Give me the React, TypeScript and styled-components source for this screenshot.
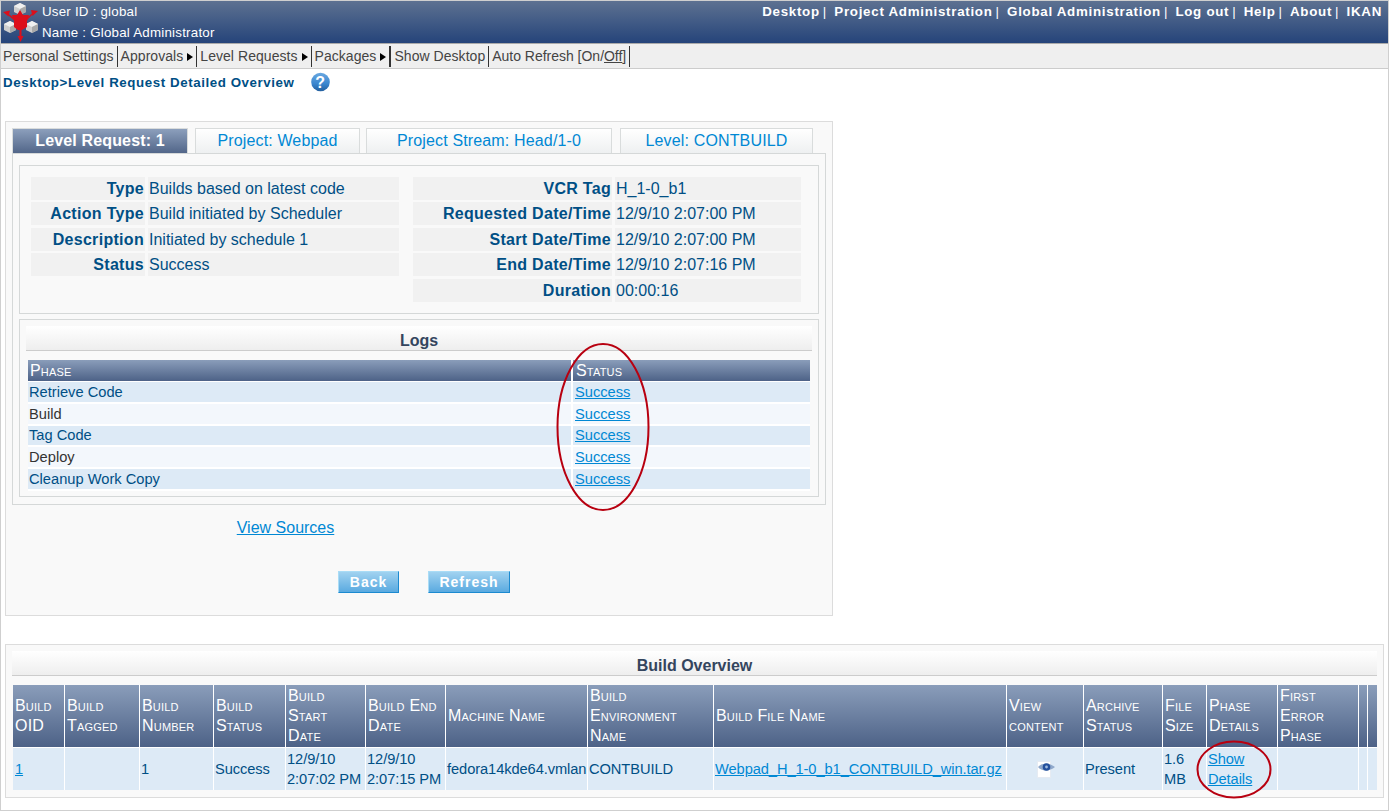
import React from "react";
import styled, { createGlobalStyle } from "styled-components";

const Global = createGlobalStyle`
  html, body { margin: 0; padding: 0; background: #fff; }
  body { font-family: "Liberation Sans", Arial, sans-serif; color: #004f85; }
  * { box-sizing: border-box; }
  a { color: #0088d4; text-decoration: underline; }
`;

const Page = styled.div`
  position: relative;
  width: 1389px;
  height: 811px;
  border: 1px solid #cfcfcf;
  overflow: hidden;
  background: #fff;
`;

const Header = styled.header`
  height: 43px;
  display: flex;
  justify-content: space-between;
  background: linear-gradient(#5d7191, #25447a);
  border-bottom: 1px solid #aaa;
  color: #fff;
`;
const Brand = styled.div`
  display: flex;
`;
const Who = styled.div`
  padding-left: 1px;
  font-size: 13.33px;
  letter-spacing: 0.22px;
  line-height: 21px;
`;
const TopNav = styled.nav`
  font-size: 13.33px;
  font-weight: bold;
  letter-spacing: 0.72px;
  padding: 2px 6px 0 0;
  line-height: 18px;
  white-space: nowrap;
  & span { font-weight: normal; margin: 0 8px 0 3px; letter-spacing: 0; }
`;

const Menu = styled.nav`
  height: 25px;
  display: flex;
  background: #efefef;
  border-bottom: 1px solid #ccc;
  font-size: 14px;
  letter-spacing: 0.05px;
  color: #444;
  padding-top: 2px;
`;
const MenuItem = styled.div`
  height: 21px;
  line-height: 20px;
  padding: 0 3px 2px ${(p) => (p.$first ? 2 : 3)}px;
  border-right: ${(p) => (p.$thick ? 2 : 1)}px solid #333;
  letter-spacing: ${(p) => (p.$tight ? "-0.02px" : "inherit")};
  white-space: nowrap;
  display: flex;
  align-items: center;
  gap: 4px;
  & u { text-decoration: underline; }
`;
const Arrow = styled.i`
  width: 0;
  height: 0;
  margin-top: 2px;
  border-left: 6px solid #000;
  border-top: 4px solid transparent;
  border-bottom: 4px solid transparent;
`;

const Crumb = styled.div`
  height: 52px;
  display: flex;
  align-items: flex-start;
  padding: 4px 0 0 2px;
  font-size: 13.33px;
  font-weight: bold;
  letter-spacing: 0.57px;
  line-height: 20px;
  & svg { margin: -1px 0 0 16px; }
`;

const Panel = styled.section`
  margin-left: 4px;
  width: 828px;
  height: 495px;
  background: #f9f9f9;
  border: 1px solid #dcdcdc;
  padding: 6px 6px 0;
`;
const Tabs = styled.div`
  display: flex;
  height: 26px;
`;
const Tab = styled.div`
  width: ${(p) => p.$w}px;
  margin-left: ${(p) => p.$gap}px;
  height: 25px;
  text-align: center;
  line-height: 24px;
  font-size: 16px;
  letter-spacing: 0.15px;
  color: ${(p) => (p.$active ? "#fff" : "#0088d4")};
  font-weight: ${(p) => (p.$active ? "bold" : "normal")};
  background: ${(p) =>
    p.$active ? "linear-gradient(#8c9fbc, #526689)" : "linear-gradient(#fff, #eef0f1)"};
  border: 1px solid #d9dcdc;
  border-bottom: 0;
`;
const Outer = styled.div`
  width: 814px;
  height: 352px;
  margin-top: -1px;
  border: 1px solid #d5d8d8;
  padding: 11px 6px 0;
`;
const Details = styled.div`
  height: 149px;
  border: 1px solid #d5d8d8;
  padding: 11px 10px 0 11px;
  display: grid;
  grid-template-columns: 368px 388px;
  column-gap: 14px;
  align-items: start;
`;
const Rows = styled.div`
  display: flex;
  flex-direction: column;
  gap: 3.4px;
`;
const DRow = styled.div`
  display: grid;
  grid-template-columns: ${(p) => p.$label}px 1fr;
  column-gap: 3px;
  height: 22px;
  line-height: 23px;
  font-size: 16px;
  white-space: nowrap;
`;
const DLabel = styled.b`
  background: #f1f1f1;
  text-align: right;
  padding-right: 1px;
  letter-spacing: 0.3px;
`;
const DValue = styled.span`
  background: #f1f1f1;
  padding-left: 1px;
`;
const Logs = styled.div`
  margin-top: 5px;
  height: 178px;
  border: 1px solid #d5d8d8;
  padding: 6px 6px 0;
`;
const Title = styled.h3`
  margin: 0;
  height: 25px;
  background: linear-gradient(#fff, #eee);
  border-bottom: 1px solid #ccc;
  text-align: center;
  color: #34455e;
  font-size: 16px;
  line-height: 30px;
`;
const Th = styled.th`
  background: linear-gradient(#8a9dba, #4d6287);
  color: #fff;
  font-weight: normal;
  font-variant: small-caps;
  font-size: 16px;
  letter-spacing: 0.2px;
  line-height: 20px;
  text-align: left;
`;
const LogTable = styled.table`
  table-layout: fixed;
  border-collapse: separate;
  border-spacing: 0;
  width: 782px;
  margin: 9px 0 0 2px;
  font-size: 14.67px;
  & th { height: 22px; padding: 0 0 0 2px; border-bottom: 1px solid #fff; }
  & td { padding: 0 0 0 1px; border-bottom: 2px solid #fff; line-height: 19px; white-space: nowrap; }
  & th:first-child, & td:first-child { border-right: 2px solid #fff; }
  & th:last-child { padding-left: 3px; }
  & td:last-child { padding-left: 2px; }
`;
const LogRow = styled.tr`
  background: ${(p) => (p.$alt ? "#f3f7fc" : "#ddeaf6")};
  color: ${(p) => (p.$alt ? "#333" : "#004f85")};
  & td { height: ${(p) => p.$h}px; }
`;

const SourceLink = styled.div`
  width: 547px;
  text-align: center;
  margin-top: 13px;
  font-size: 16px;
  line-height: 20px;
`;
const Buttons = styled.div`
  display: flex;
  gap: 29px;
  margin: 33px 0 0 326px;
`;
const Button = styled.button`
  height: 22px;
  width: ${(p) => p.$w}px;
  padding: 0;
  border: 0;
  border-top: 1px solid #a9dcf6;
  border-left: 1px solid #a9dcf6;
  border-right: 1px solid #1c8ad0;
  border-bottom: 1px solid #1c8ad0;
  background: linear-gradient(#a0d2f0, #5aaae0);
  color: #fff;
  font-family: inherit;
  font-weight: bold;
  font-size: 14px;
  letter-spacing: 1px;
`;

const BuildPanel = styled.section`
  margin: 28px 0 0 4px;
  width: 1379px;
  height: 154px;
  background: #f9f9f9;
  border: 1px solid #dcdcdc;
  padding: 6px 6px 0;
`;
const BuildTable = styled.table`
  table-layout: fixed;
  border-collapse: separate;
  border-spacing: 0;
  width: 1364px;
  margin: 9px 0 0 1px;
  font-size: 14.67px;
  letter-spacing: -0.08px;
  & th, & td { border-right: 1px solid #fff; }
  & th:last-child, & td:last-child { border-right: 0; }
  & td { padding: 0 0 0 1px; border-top: 1px solid #fff; height: 43px; background: #ddeaf6; line-height: 20px; }
  & td:first-child { padding-left: 2px; }
`;
const BuildTh = styled(Th)`
  height: 62px;
  padding: 0 3px 0 2px;
`;
const Nowrap = styled.a`
  white-space: nowrap;
`;
const IconCell = styled.td`
  text-align: center;
  & svg { display: block; margin: 0 auto; }
`;

const Ring = styled.svg`
  position: absolute;
  pointer-events: none;
  left: ${(p) => p.$x}px;
  top: ${(p) => p.$y}px;
`;
const RingLine = styled.ellipse`
  fill: none;
  stroke: #b80010;
  stroke-width: 2;
`;

const Cube = ({ x, y }: { x: number; y: number }) => (
  <g transform={`translate(${x} ${y})`}>
    <path d="M6 0L12 3V9L6 12L0 9V3Z" fill="#cfcfcf" />
    <path d="M6 0L12 3L6 6L0 3Z" fill="#f0f0f0" />
    <path d="M6 6L12 3V9L6 12Z" fill="#a9a9a9" />
  </g>
);

const Logo = () => (
  <svg width="40" height="42" viewBox="1 1 40 42">
    <Cube x={14} y={3} />
    <Cube x={4} y={21} />
    <Cube x={26} y={21} />
    <g fill="#dc0f1b">
      <path d="M20 10L23 15L29 15L27 21L27 27L22 30L18 30L14 27L14 21L12 15L17 15Z" />
      <path d="M14 18L8 13.500L9 16L15 21Z" />
      <path d="M27 18L33 12.500L32 15L26 21Z" />
      <path d="M19.500 29H21.500V37H19.500Z" />
      <path d="M3 12L10 10.500L8.500 16.500Z" />
      <path d="M38 11L31 10L32.500 16Z" />
      <path d="M17.500 36H23.500L20.500 42Z" />
    </g>
  </svg>
);

const Help = () => (
  <svg width="19" height="20" viewBox="0 0 19 20">
    <defs>
      <linearGradient id="hg" x1="0" y1="0" x2="0" y2="1">
        <stop offset="0" stopColor="#6aa8e0" />
        <stop offset=".6" stopColor="#3a86cf" />
        <stop offset="1" stopColor="#235f9e" />
      </linearGradient>
    </defs>
    <circle cx="9.5" cy="10" r="9.3" fill="url(#hg)" />
    <text x="9.5" y="16" textAnchor="middle" fontSize="16" fontWeight="bold" fill="#fff" fontFamily="Liberation Sans">?</text>
  </svg>
);

const Eye = () => (
  <svg width="18" height="17" viewBox="0 0 18 17">
    <rect x=".5" y=".5" width="13" height="16" fill="#fff" stroke="#e6ebf2" />
    <path d="M1 6C4 1.500 13 1.500 18 6C13 10.500 4 10.500 1 6Z" fill="#8fa8cb" />
    <circle cx="9.500" cy="6" r="3.800" fill="#24509c" />
    <circle cx="9.500" cy="6" r="1.400" fill="#9fbbe0" />
  </svg>
);

const left = [
  ["Type", "Builds based on latest code"],
  ["Action Type", "Build initiated by Scheduler"],
  ["Description", "Initiated by schedule 1"],
  ["Status", "Success"],
];
const right = [
  ["VCR Tag", "H_1-0_b1"],
  ["Requested Date/Time", "12/9/10 2:07:00 PM"],
  ["Start Date/Time", "12/9/10 2:07:00 PM"],
  ["End Date/Time", "12/9/10 2:07:16 PM"],
  ["Duration", "00:00:16"],
];
const phases: [string, number][] = [
  ["Retrieve Code", 22], ["Build", 22], ["Tag Code", 21], ["Deploy", 22], ["Cleanup Work Copy", 22],
];
const columns: [string, number][] = [
  ["Build OID", 52], ["Build Tagged", 75], ["Build Number", 74], ["Build Status", 72],
  ["Build Start Date", 80], ["Build End Date", 80], ["Machine Name", 142],
  ["Build Environment Name", 126], ["Build File Name", 293], ["View content", 77],
  ["Archive Status", 79], ["File Size", 44], ["Phase Details", 71],
  ["First Error Phase", 81], ["", 9], ["", 9],
];
const navItems = ["Desktop", "Project Administration", "Global Administration", "Log out", "Help", "About"];

export default function App() {
  return (
    <Page>
      <Global />
      <Header>
        <Brand>
          <Logo />
          <Who>
            User ID : global
            <br />
            Name : Global Administrator
          </Who>
        </Brand>
        <TopNav>
          {navItems.map((n) => (
            <React.Fragment key={n}>
              {n}
              <span>|</span>
            </React.Fragment>
          ))}
          IKAN
        </TopNav>
      </Header>
      <Menu>
        <MenuItem $first>Personal Settings</MenuItem>
        <MenuItem>Approvals <Arrow /></MenuItem>
        <MenuItem>Level Requests <Arrow /></MenuItem>
        <MenuItem $thick>Packages <Arrow /></MenuItem>
        <MenuItem>Show Desktop</MenuItem>
        <MenuItem $tight>
          <span>Auto Refresh [On/<u>Off</u>]</span>
        </MenuItem>
      </Menu>
      <Crumb>
        Desktop&gt;Level Request Detailed Overview
        <Help />
      </Crumb>
      <Panel>
        <Tabs>
          <Tab $w={176} $gap={0} $active>Level Request: 1</Tab>
          <Tab $w={165} $gap={7}>Project: Webpad</Tab>
          <Tab $w={246} $gap={6}>Project Stream: Head/1-0</Tab>
          <Tab $w={193} $gap={8}>Level: CONTBUILD</Tab>
        </Tabs>
        <Outer>
          <Details>
            <Rows>
              {left.map(([k, v]) => (
                <DRow key={k} $label={114}><DLabel>{k}</DLabel><DValue>{v}</DValue></DRow>
              ))}
            </Rows>
            <Rows>
              {right.map(([k, v]) => (
                <DRow key={k} $label={199}><DLabel>{k}</DLabel><DValue>{v}</DValue></DRow>
              ))}
            </Rows>
          </Details>
          <Logs>
            <Title>Logs</Title>
            <LogTable>
              <colgroup><col width="545" /><col /></colgroup>
              <thead>
                <tr><Th>Phase</Th><Th>Status</Th></tr>
              </thead>
              <tbody>
                {phases.map(([p, h], i) => (
                  <LogRow key={p} $alt={i % 2 === 1} $h={h}>
                    <td>{p}</td>
                    <td><a href="#s">Success</a></td>
                  </LogRow>
                ))}
              </tbody>
            </LogTable>
          </Logs>
        </Outer>
        <SourceLink><a href="#v">View Sources</a></SourceLink>
        <Buttons>
          <Button $w={61}>Back</Button>
          <Button $w={82}>Refresh</Button>
        </Buttons>
      </Panel>
      <BuildPanel>
        <Title>Build Overview</Title>
        <BuildTable>
          <colgroup>
            {columns.map(([n, w], i) => <col key={i} width={w} />)}
          </colgroup>
          <thead>
            <tr>{columns.map(([n], i) => <BuildTh key={i}>{n}</BuildTh>)}</tr>
          </thead>
          <tbody>
            <tr>
              <td><a href="#1">1</a></td>
              <td></td>
              <td>1</td>
              <td>Success</td>
              <td>12/9/10 2:07:02 PM</td>
              <td>12/9/10 2:07:15 PM</td>
              <td>fedora14kde64.vmlan</td>
              <td>CONTBUILD</td>
              <td><Nowrap href="#f">Webpad_H_1-0_b1_CONTBUILD_win.tar.gz</Nowrap></td>
              <IconCell><Eye /></IconCell>
              <td>Present</td>
              <td>1.6 MB</td>
              <td><a href="#d">Show Details</a></td>
              <td></td>
              <td></td>
              <td></td>
            </tr>
          </tbody>
        </BuildTable>
      </BuildPanel>
      <Ring $x={555} $y={342} width="96" height="170">
        <RingLine cx="47" cy="84" rx="45.500" ry="83" />
      </Ring>
      <Ring $x={1195} $y={739} width="78" height="60">
        <RingLine cx="38" cy="29.500" rx="36.500" ry="28" />
      </Ring>
    </Page>
  );
}
